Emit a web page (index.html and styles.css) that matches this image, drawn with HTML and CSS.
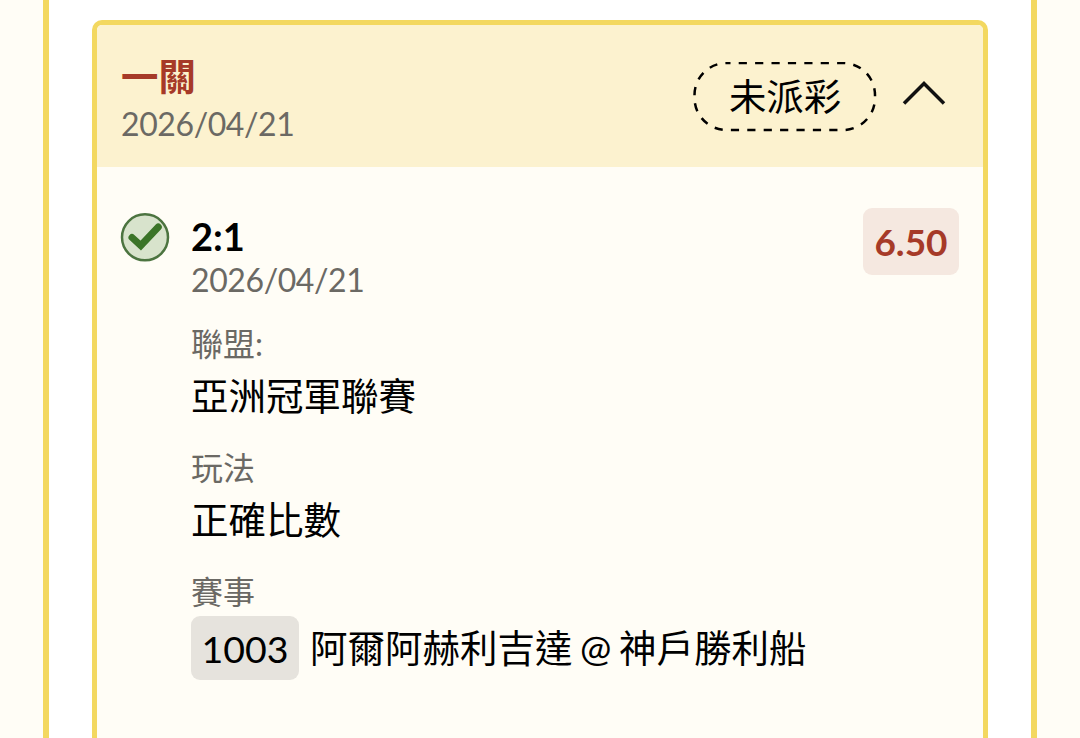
FILE: index.html
```html
<!DOCTYPE html>
<html lang="zh-Hant">
  <head>
    <meta charset="UTF-8" />
    <meta name="viewport" content="width=device-width, initial-scale=1.0" />
    <title>投注紀錄</title>
    <link rel="stylesheet" href="styles.css">
  </head>
  <body>
    <div class="panel">
      <div class="ticket">
        <div class="ticket-header">
          <div>
            <h2>一關</h2>
            <div class="date">2026/04/21</div>
          </div>
          <div class="header-right">
            <span class="status">
              <svg width="184" height="71" viewBox="0 0 184 71">
                <rect x="1.5" y="1" width="180.5" height="67" rx="32" />
              </svg>
              未派彩
            </span>
            <svg class="arrow" width="44" height="28" viewBox="0 0 44 28">
              <path d="M2 23.5 L22 3.5 L42 23.5" />
            </svg>
          </div>
        </div>

        <div class="bet">
          <svg class="check" width="50" height="50" viewBox="0 0 50 50">
            <circle cx="25" cy="25.3" r="23" />
            <path d="M12 25.5 L20.8 33.5 L38.3 15" />
          </svg>
          <div class="bet-info">
            <h3>2:1</h3>
            <div class="date">2026/04/21</div>
            <dl>
              <dt>聯盟:</dt>
              <dd>亞洲冠軍聯賽</dd>
              <dt>玩法</dt>
              <dd>正確比數</dd>
              <dt>賽事</dt>
              <dd class="match">
                <span class="code">1003</span>
                <span class="teams">阿爾阿赫利吉達 @ 神戶勝利船</span>
              </dd>
            </dl>
          </div>
          <div class="odds">6.50</div>
        </div>
      </div>
    </div>
  </body>
</html>
```
FILE: styles.css
```css
* {
  box-sizing: border-box;
}

body {
  margin: 0;
  height: 100vh;
  overflow: hidden;
  background-color: #fffdf6;
  color: #000;
  font-family: Lato, "Noto Sans CJK TC", sans-serif;
}

.panel {
  height: 100vh;
  margin: 0 43px;
  padding: 20px 43px 0;
  background-color: #fff;
  border: solid #f3d860;
  border-width: 0 6px;
}

.ticket {
  height: 100%;
  background-color: #fffdf6;
  border: 5px solid #f3d860;
  border-bottom: 0;
  border-radius: 10px 10px 0 0;
  overflow: hidden;
}

.ticket-header {
  display: flex;
  justify-content: space-between;
  height: 142px;
  padding: 29px 37px 0 24px;
  background-color: #fcf2cf;
}

h2,
h3,
dl,
dd {
  margin: 0;
}

h2 {
  color: #a63a28;
  font-size: 37.4px;
  line-height: 45px;
}

.date {
  color: #6b6964;
  font-size: 32px;
  line-height: 50px;
  letter-spacing: -0.4px;
}

.header-right {
  display: flex;
  align-items: flex-start;
  gap: 25px;
  padding-top: 8px;
}

.status {
  position: relative;
  width: 184px;
  height: 71px;
  font-size: 37.4px;
  line-height: 70px;
  text-align: center;
}

.status svg {
  position: absolute;
  top: 0;
  left: 0;
}

.status rect {
  fill: none;
  stroke: #000;
  stroke-width: 2.5;
  stroke-dasharray: 8.2;
  stroke-dashoffset: 4.2;
}

.arrow {
  margin-top: 18px;
}

.arrow path {
  fill: none;
  stroke: #111;
  stroke-width: 3.5;
}

.bet {
  display: flex;
  align-items: flex-start;
  padding: 41px 24px 0;
}

.check {
  margin: 4px 21px 0 -1px;
}

.check circle {
  fill: #d8e3cc;
  stroke: #4c7440;
  stroke-width: 2.5;
}

.check path {
  fill: none;
  stroke: #3b7428;
  stroke-width: 7;
  stroke-linecap: round;
}

.bet-info {
  flex: 1;
}

h3 {
  font-size: 38px;
  line-height: 57px;
}

.bet-info .date {
  line-height: 30px;
}

dl {
  padding-top: 4px;
}

dt {
  margin-top: 20px;
  color: #6b6964;
  font-size: 32px;
  line-height: 46px;
}

dt:first-child {
  margin-top: 22px;
}

dd {
  font-size: 37.5px;
  line-height: 58px;
}

.match {
  display: flex;
  gap: 11px;
  padding-top: 1px;
}

.code {
  width: 108px;
  height: 64px;
  background-color: #e6e3dd;
  border-radius: 9px;
  line-height: 66px;
  text-align: center;
}

.teams {
  line-height: 64px;
  word-spacing: -2px;
}

.odds {
  width: 96px;
  height: 67px;
  background-color: #f5e8e0;
  border-radius: 9px;
  color: #a63a28;
  font-size: 37px;
  font-weight: bold;
  line-height: 68px;
  text-align: center;
}
```
